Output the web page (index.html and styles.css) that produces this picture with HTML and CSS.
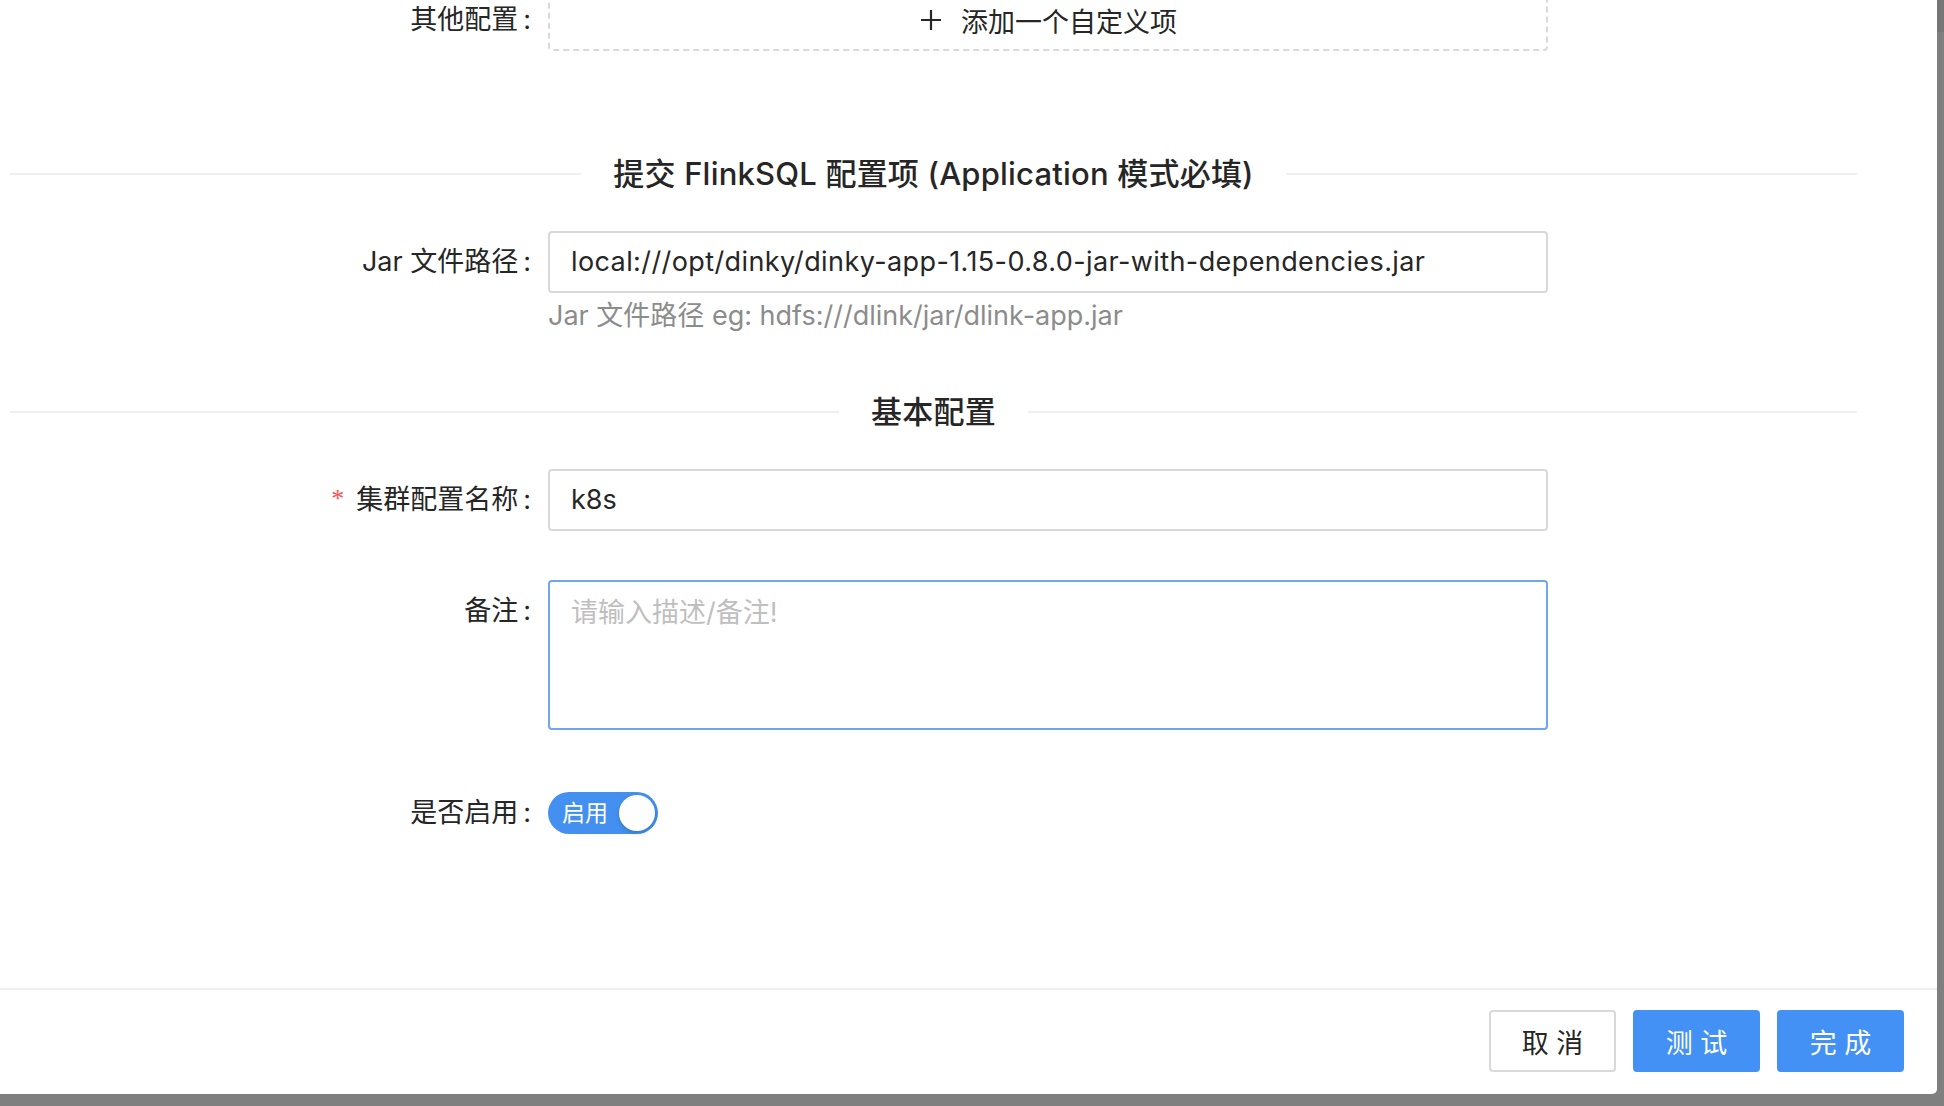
FILE: index.html
```html
<!DOCTYPE html>
<html lang="zh-CN">
<head>
<meta charset="utf-8">
<title>集群配置</title>
<link rel="stylesheet" href="styles.css">
</head>
<body>
<div class="modal">
  <div class="modal-body">
    <div class="form">
      <div class="form-item row-first">
        <div class="label">其他配置<span class="colon">:</span></div>
        <div class="control">
          <div class="dashed-btn">
            <svg class="plus" width="24" height="24" viewBox="0 0 24 24"><path d="M12 2v20M2 12h20" stroke="#262626" stroke-width="2.2" fill="none"/></svg>
            <span>添加一个自定义项</span>
          </div>
        </div>
      </div>

      <div class="divider divider-first"><span class="divider-text">提交 FlinkSQL 配置项 (Application 模式必填)</span></div>

      <div class="form-item row-jar">
        <div class="label">Jar 文件路径<span class="colon">:</span></div>
        <div class="control">
          <div class="input input-path">local:///opt/dinky/dinky-app-1.15-0.8.0-jar-with-dependencies.jar</div>
          <div class="help">Jar 文件路径 eg: hdfs:///dlink/jar/dlink-app.jar</div>
        </div>
      </div>

      <div class="divider divider-second"><span class="divider-text">基本配置</span></div>

      <div class="form-item row-name">
        <div class="label"><span class="required">*</span>集群配置名称<span class="colon">:</span></div>
        <div class="control">
          <div class="input">k8s</div>
        </div>
      </div>

      <div class="form-item row-note">
        <div class="label">备注<span class="colon">:</span></div>
        <div class="control">
          <div class="textarea"><span class="placeholder">请输入描述/备注!</span></div>
        </div>
      </div>

      <div class="form-item row-switch">
        <div class="label">是否启用<span class="colon">:</span></div>
        <div class="control control-switch">
          <div class="switch"><span class="switch-text">启用</span><span class="switch-handle"></span></div>
        </div>
      </div>
    </div>
  </div>
  <div class="modal-footer">
    <button class="btn btn-default">取 消</button>
    <button class="btn btn-primary">测 试</button>
    <button class="btn btn-primary">完 成</button>
  </div>
</div>
</body>
</html>
```

FILE: styles.css
```css
html, body {
  margin: 0;
  padding: 0;
}
body {
  width: 1944px;
  height: 1106px;
  overflow: hidden;
  background: linear-gradient(to bottom, #767676 0, #767676 32px, #7f7f7f 32px, #7f7f7f 100%);
  font-family: "Inter", "Noto Sans CJK SC", sans-serif;
  color: #262626;
}
.modal {
  width: 1937px;
  height: 1094px;
  background: #ffffff;
  border-bottom-right-radius: 5px;
  display: flex;
  flex-direction: column;
  overflow: hidden;
}
.modal-body {
  height: 988px;
  padding: 0 80px 0 10px;
  overflow: hidden;
  flex: none;
}
.form {
  margin-top: -11px;
}
.form-item {
  display: grid;
  grid-template-columns: 538px 1000px;
  align-items: start;
  font-size: 27px;
}
.label {
  height: 62px;
  line-height: 62px;
  text-align: right;
  padding-right: 17px;
  white-space: nowrap;
  color: #262626;
}
.colon {
  margin-left: 5px;
  margin-right: 0;
}
.required {
  color: #ff4d4f;
  font-size: 26px;
  margin-right: 12px;
  font-family: "Liberation Serif", serif;
  position: relative;
  top: -2px;
}
.control {
  min-height: 62px;
}
.dashed-btn {
  box-sizing: border-box;
  height: 62px;
  border: 2px dashed #d9d9d9;
  border-radius: 4px;
  display: flex;
  align-items: center;
  justify-content: center;
  gap: 18px;
  font-size: 27px;
  color: #262626;
}
.plus {
  display: block;
}
.divider {
  display: flex;
  align-items: center;
  height: 50px;
  font-size: 31px;
  font-weight: 500;
  color: #262626;
}
.divider::before,
.divider::after {
  content: "";
  flex: 1;
  border-top: 2px solid #efefef;
}
.divider-text {
  padding: 0 32px;
  white-space: nowrap;
  line-height: 50px;
  letter-spacing: 0.2px;
}
.divider-first {
  margin-top: 98px;
}
.divider-second {
  margin-top: 50px;
}
.row-jar {
  margin-top: 32px;
}
.row-name {
  margin-top: 32px;
}
.row-note {
  margin-top: 49px;
}
.row-switch {
  margin-top: 52px;
}
.input {
  box-sizing: border-box;
  height: 62px;
  border: 2px solid #d9d9d9;
  border-radius: 4px;
  padding: 0 21px;
  line-height: 58px;
  white-space: nowrap;
  overflow: hidden;
  color: #262626;
}
.input-path {
  letter-spacing: 0.4px;
}
.help {
  margin-top: 2px;
  line-height: 42px;
  color: #8c8c8c;
}
.textarea {
  box-sizing: border-box;
  height: 150px;
  border: 2px solid #6ea7ea;
  border-radius: 4px;
  padding: 10px 21px;
  line-height: 42px;
}
.placeholder {
  color: #bfbfbf;
}
.control-switch {
  display: flex;
  align-items: center;
  height: 62px;
}
.switch {
  box-sizing: border-box;
  width: 110px;
  height: 42px;
  border-radius: 21px;
  background: #4390f0;
  display: flex;
  align-items: center;
  justify-content: space-between;
  padding: 0 3px 0 14px;
}
.switch-text {
  color: #ffffff;
  font-size: 23px;
  line-height: 42px;
}
.switch-handle {
  width: 36px;
  height: 36px;
  border-radius: 50%;
  background: #ffffff;
  box-shadow: 0 2px 4px rgba(0, 35, 11, 0.2);
}
.modal-footer {
  flex: none;
  border-top: 2px solid #f0f0f0;
  padding: 20px 33px 0 0;
  display: flex;
  justify-content: flex-end;
  gap: 17px;
}
.btn {
  box-sizing: border-box;
  width: 127px;
  height: 62px;
  border-radius: 4px;
  font-family: "Inter", "Noto Sans CJK SC", sans-serif;
  font-size: 27px;
  cursor: pointer;
  padding: 0;
}
.btn-default {
  background: #ffffff;
  border: 2px solid #d9d9d9;
  color: #262626;
}
.btn-primary {
  background: #4391f5;
  border: 2px solid #4391f5;
  color: #ffffff;
}
```
